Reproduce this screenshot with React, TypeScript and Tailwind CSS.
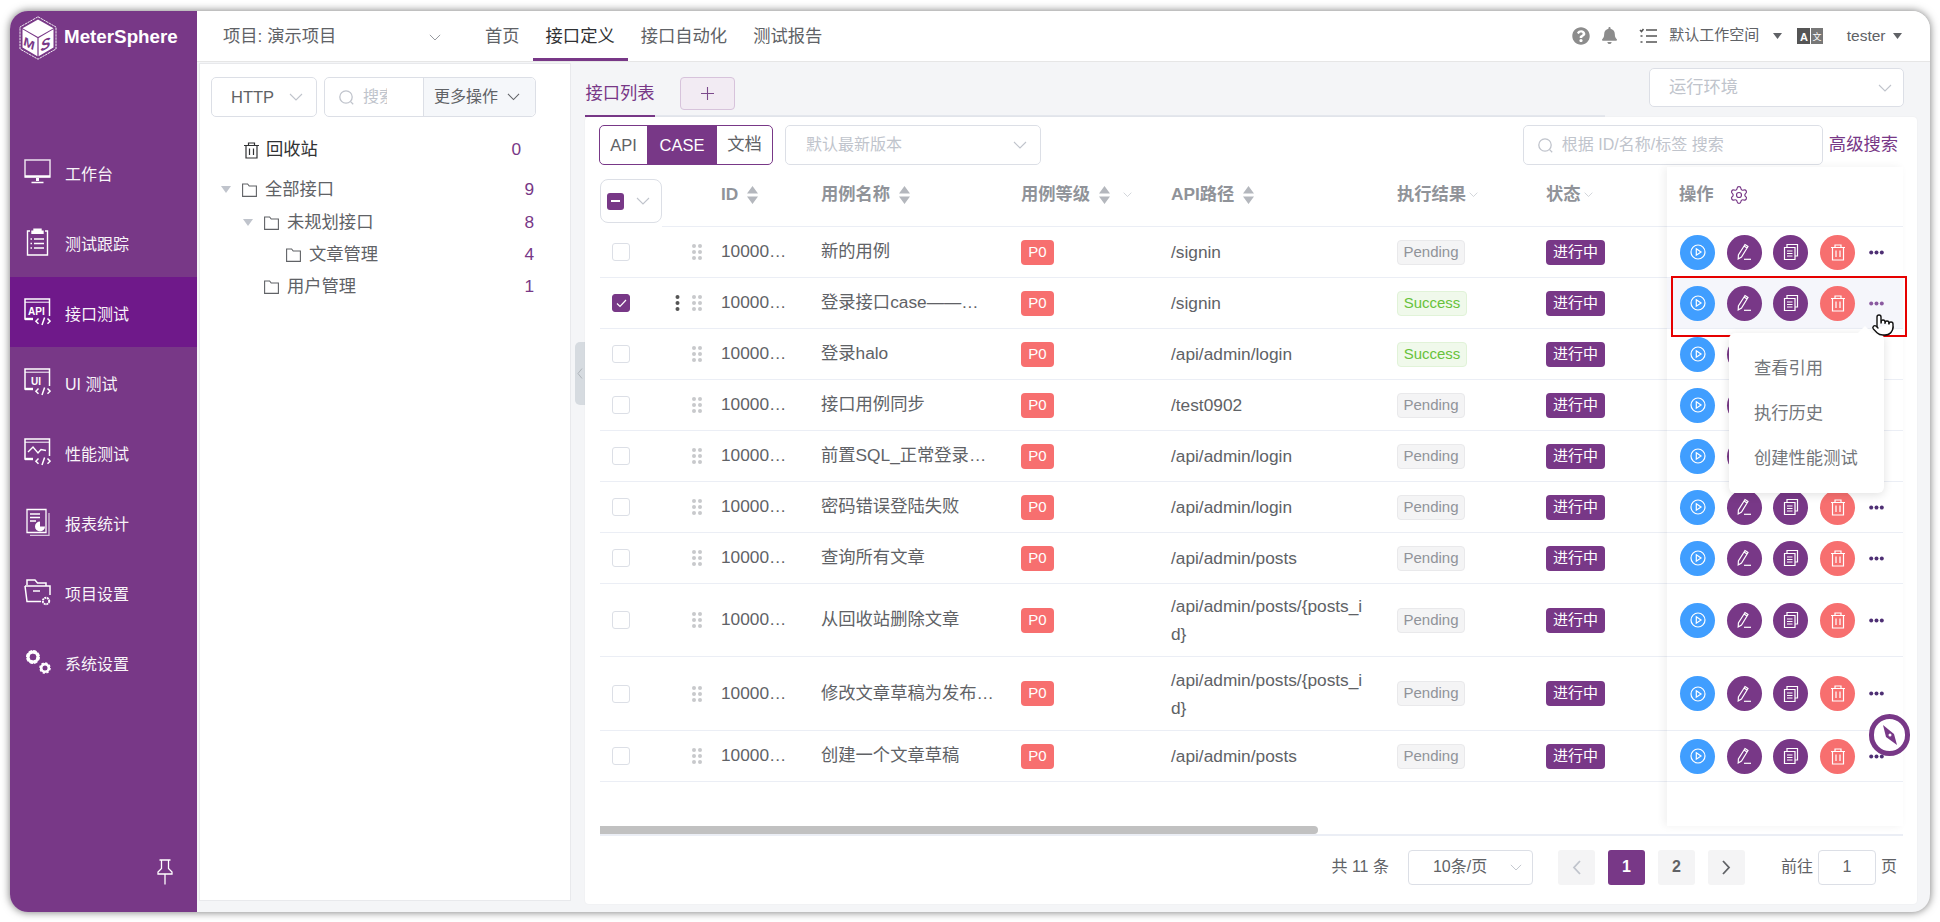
import React from "react";
import { FaBell, FaQuestionCircle } from "react-icons/fa";
import { Settings, Pointer } from "lucide-react";

const Chevron = ({ c = "#c0c4cc", w = 14 }: { c?: string; w?: number }) => (
  <svg width={w} height={(w * 8) / 14} viewBox="0 0 14 8" fill="none" stroke={c} strokeWidth="1.1">
    <path d="M1 1l6 6 6-6" />
  </svg>
);

const Search = () => (
  <svg width="17" height="17" viewBox="0 0 17 17" fill="none" stroke="#c0c4cc" strokeWidth="1.3">
    <circle cx="8" cy="8" r="6.2" />
    <path d="M12.6 12.6l2.6 2.6" />
  </svg>
);

const Folder = () => (
  <svg width="15" height="14" viewBox="0 0 15 14" fill="none" stroke="#606266" strokeWidth="1.1">
    <path d="M.6 13.4V1h5l1.6 2h7.2v10.4z" />
  </svg>
);

const Caret = () => (
  <svg width="10" height="7" viewBox="0 0 10 7" fill="#c0c4cc">
    <path d="M0 0h10L5 7z" />
  </svg>
);

const Sort = () => (
  <svg width="11" height="18" viewBox="0 0 11 18" fill="#b4b7bd" className="shrink-0">
    <path d="M5.5 0L11 7.4H0zM5.5 18L0 10.6h11z" />
  </svg>
);

const NavIcon = ({ k }: { k: string }) => {
  const code = (
    <g strokeWidth="1.5" stroke="#fff" fill="none">
      <path d="M14.5 20.5l-2.6 2.7 2.6 2.6M23.5 20.5l2.6 2.7-2.6 2.6M20.6 19.5l-2.6 7.5" />
    </g>
  );
  const frame = (
    <g stroke="#fff" fill="none" strokeWidth="1.5">
      <path d="M25.5 18V1H1v20h8" />
      <path d="M1 4.2h24.5" strokeWidth="1" />
      <path d="M1 21h8" strokeWidth="2.4" />
    </g>
  );
  return (
    <svg width="27" height="28" viewBox="0 0 27 28" fill="none" stroke="#fff" className="shrink-0">
      {k === "monitor" && (
        <g strokeWidth="1.5" fill="none">
          <path d="M1 2h25v17H1z" opacity=".85" />
          <path d="M1 18.4h25" strokeWidth="2.4" />
          <path d="M13.5 20v3" strokeWidth="3" />
          <path d="M7.5 24.5h12" strokeWidth="1.6" />
        </g>
      )}
      {k === "clip" && (
        <g strokeWidth="1.4" fill="none">
          <path d="M6 3H3.5v24h20V3H21" />
          <path d="M10 3.2V1.2h7v2h2v2H8v-2z" fill="#fff" />
          <path d="M10 11h10M10 15.500h10M10 20h10M6.500 11h1.500M6.500 15.500h1.500M6.500 20h1.500" />
        </g>
      )}
      {k === "api" && (
        <>
          {frame}
          <text x="4" y="16.500" fontSize="10" fontWeight="700" fill="#fff" stroke="none" fontFamily="Liberation Sans">API</text>
          {code}
        </>
      )}
      {k === "ui" && (
        <>
          {frame}
          <text x="7" y="16.500" fontSize="10" fontWeight="700" fill="#fff" stroke="none" fontFamily="Liberation Sans">UI</text>
          {code}
        </>
      )}
      {k === "perf" && (
        <>
          {frame}
          <path d="M4 14l5-5 5 6 3-3.500 5 1" strokeWidth="1.4" fill="none" />
          {code}
        </>
      )}
      {k === "report" && (
        <g fill="none" strokeWidth="1.3">
          <path d="M3 1.500h19v23H3z" />
          <path d="M25 5v22.500H6" opacity=".7" />
          <path d="M6 6h10M6 9.500h10M6 13h6" />
          <path d="M16 13.500a5 5 0 1 0 5 5h-5z" fill="#fff" stroke="none" />
        </g>
      )}
      {k === "proj" && (
        <g fill="none" strokeWidth="1.5">
          <path d="M3 7V2h8l2.500 3H22v3" />
          <path d="M1 8h25v9M17 23.500H3L1 8" />
          <path d="M9 13h7" />
          <circle cx="22" cy="23" r="3.200" strokeWidth="2" strokeDasharray="2 .6" />
        </g>
      )}
      {k === "sys" && (
        <g fill="none" stroke="#fff">
          <circle cx="9" cy="9" r="5.200" strokeWidth="3.600" strokeDasharray="3 1" />
          <circle cx="9" cy="9" r="5" strokeWidth="2.800" />
          <circle cx="21" cy="20" r="3.800" strokeWidth="2.600" />
          <circle cx="21" cy="20" r="4.400" strokeWidth="2.800" strokeDasharray="2 1.400" />
        </g>
      )}
    </svg>
  );
};

const nav = [
  ["monitor", "工作台"],
  ["clip", "测试跟踪"],
  ["api", "接口测试"],
  ["ui", "UI 测试"],
  ["perf", "性能测试"],
  ["report", "报表统计"],
  ["proj", "项目设置"],
  ["sys", "系统设置"],
];

const Logo = () => (
  <svg width="38" height="44" viewBox="0 0 38 44" className="shrink-0">
    <path d="M19 .8L37 11v22L19 43.200 1 33V11z" fill="none" stroke="#fff" strokeWidth=".9" strokeDasharray="2.500 .6" />
    <path d="M19 3.500L34.500 12.200 19 21 3.500 12.200z" fill="#fff" />
    <path d="M3.500 13.200L18.400 22v18.300L3.500 31.600z" fill="#fff" />
    <path d="M19.600 22l14.900-8.800v18.400L19.600 40.300z" fill="#fff" />
    <text x="0" y="0" fontSize="13" fontWeight="700" fontStyle="italic" fill="#783887" fontFamily="Liberation Sans" transform="translate(4.500 29) skewY(28)">M</text>
    <text x="0" y="0" fontSize="15" fontWeight="700" fontStyle="italic" fill="#783887" fontFamily="Liberation Sans" transform="translate(21.500 36) skewY(-28)">S</text>
  </svg>
);

const Sidebar = () => (
  <aside className="flex w-[187px] shrink-0 flex-col bg-[#783887] text-white">
    <div className="flex h-[126px] items-start gap-[7px] pl-[9px] pt-[5px]">
      <Logo />
      <span className="mt-[10px] text-[18.800px] font-bold leading-[22px]">MeterSphere</span>
    </div>
    {nav.map(([k, t]) => (
      <div key={k} className={`flex h-[70px] items-center gap-[14px] pl-[14px] text-[16px] ${k === "api" ? "bg-[#6f198a]" : ""}`}>
        <NavIcon k={k} />
        <span className="pt-[5px] opacity-95">{t}</span>
      </div>
    ))}
    <svg width="16" height="26" viewBox="0 0 16 26" fill="none" stroke="#fff" strokeWidth="1.300" className="mb-[27px] mr-[24px] mt-auto self-end">
      <path d="M2.500 1h11M4.500 1v8.500L1 13v2h14v-2l-3.500-3.500V1M8 15v10.500" />
    </svg>
  </aside>
);

const Header = () => (
  <header className="flex h-[51px] shrink-0 border-b border-[#e6e6e6] bg-white text-[#606266]">
    <div className="flex w-[275px] items-center pl-[26px] pt-[2px] text-[17.3px]">
      <span className="w-[206px]">项目: 演示项目</span>
      <Chevron w={12} c="#909399" />
    </div>
    <nav className="flex text-[17.3px]">
      <a className="flex h-[50px] items-center px-[13px] pt-[2px]">首页</a>
      <a className="flex h-[50px] items-center border-b-[3px] border-[#783887] px-[13px] pt-[4px] text-[#303133]">接口定义</a>
      <a className="flex h-[50px] items-center px-[13px] pt-[2px]">接口自动化</a>
      <a className="flex h-[50px] items-center px-[13px] pt-[2px]">测试报告</a>
    </nav>
    <div className="ml-auto flex items-center pb-[1px] pr-[28px] text-[15px]">
      <FaQuestionCircle className="text-[18px] text-[#8c8c8c]" />
      <FaBell className="ml-[11px] text-[17px] text-[#8c8c8c]" />
      <svg width="18" height="16" viewBox="0 0 18 16" fill="none" stroke="#555" strokeWidth="1.600" className="ml-[21.500px]">
        <path d="M7 2h11M7 8h11M7 14h11M1 2l1.500 1.500L4.500 1M1.500 8h2M1.500 14h2" />
      </svg>
      <span className="ml-[12px]">默认工作空间</span>
      <svg width="9" height="6" viewBox="0 0 9 6" fill="#606266" className="ml-[14px]"><path d="M0 0h9L4.500 6z" /></svg>
      <svg width="26" height="16" viewBox="0 0 26 16" className="ml-[15px]">
        <rect width="13" height="16" fill="#555" />
        <rect x="14" width="12" height="16" fill="#777" />
        <text x="3" y="12.500" fontSize="11" fontWeight="700" fill="#fff" fontFamily="Liberation Sans">A</text>
        <text x="15.500" y="12" fontSize="9" fill="#fff" fontFamily="Noto Sans CJK SC">文</text>
      </svg>
      <span className="ml-[23.500px] text-[15.500px]">tester</span>
      <svg width="9" height="6" viewBox="0 0 9 6" fill="#606266" className="ml-[7.500px]"><path d="M0 0h9L4.500 6z" /></svg>
    </div>
  </header>
);

const Tree = () => (
  <section className="mb-[11px] ml-[2px] mt-[1px] w-[372px] shrink-0 border border-[#e8e9ec] bg-white text-[17.3px] text-[#606266]">
    <div className="flex pl-[11px] pt-[13px] text-[16px]">
      <div className="flex h-[40px] w-[106px] items-center justify-between rounded-[5px] border border-[#dcdfe6] pl-[19px] pr-[13px] text-[16.500px]">
        HTTP <Chevron />
      </div>
      <div className="ml-[7px] flex h-[40px] w-[212px] rounded-[5px] border border-[#dcdfe6]">
        <div className="flex w-[98px] items-center gap-[8px] overflow-hidden pl-[13px] text-[#c0c4cc]">
          <Search />
          <span className="w-[24px] overflow-hidden whitespace-nowrap">搜索</span>
        </div>
        <div className="flex flex-1 items-center gap-[9px] rounded-r-[5px] border-l border-[#dcdfe6] bg-[#f5f7fa] pl-[10px]">
          更多操作 <Chevron c="#606266" w={13} />
        </div>
      </div>
    </div>
    <div className="mt-[17px] flex h-[32px] items-center justify-between pl-[44px] pr-[49px] text-[#303133]">
      <span className="flex items-center gap-[7px]">
        <svg width="15" height="17" viewBox="0 0 15 17" fill="none" stroke="#303133" strokeWidth="1.200">
          <path d="M0 3.500h15M4.500 3.500V1h6v2.500M2 3.500V16h11V3.500M5.500 6.500V13M9.500 6.500V13" />
        </svg>
        回收站
      </span>
      <span className="text-[#783887]">0</span>
    </div>
    <div className="mt-[7px] flex h-[33px] items-center justify-between pl-[21px] pr-[36px]">
      <span className="flex items-center"><Caret /><span className="ml-[11px] mr-[8px]"><Folder /></span>全部接口</span>
      <span className="text-[#783887]">9</span>
    </div>
    <div className="flex h-[33px] items-center justify-between pl-[43px] pr-[36px]">
      <span className="flex items-center"><Caret /><span className="ml-[11px] mr-[8px]"><Folder /></span>未规划接口</span>
      <span className="text-[#783887]">8</span>
    </div>
    <div className="flex h-[32px] items-center justify-between pl-[86px] pr-[36px]">
      <span className="flex items-center"><span className="mr-[8px]"><Folder /></span>文章管理</span>
      <span className="text-[#783887]">4</span>
    </div>
    <div className="flex h-[32px] items-center justify-between pl-[64px] pr-[36px]">
      <span className="flex items-center"><span className="mr-[8px]"><Folder /></span>用户管理</span>
      <span className="text-[#783887]">1</span>
    </div>
  </section>
);

const rows = [
  { name: "新的用例", api: "/signin", res: "Pending", h: "h-[51px]" },
  { name: "登录接口case——登录成功", api: "/signin", res: "Success", h: "h-[51px]", on: true },
  { name: "登录halo", api: "/api/admin/login", res: "Success", h: "h-[51px]" },
  { name: "接口用例同步", api: "/test0902", res: "Pending", h: "h-[51px]" },
  { name: "前置SQL_正常登录验证成功", api: "/api/admin/login", res: "Pending", h: "h-[51px]" },
  { name: "密码错误登陆失败", api: "/api/admin/login", res: "Pending", h: "h-[51px]" },
  { name: "查询所有文章", api: "/api/admin/posts", res: "Pending", h: "h-[51px]" },
  { name: "从回收站删除文章", api: "/api/admin/posts/{posts_id}", res: "Pending", h: "h-[73px]" },
  { name: "修改文章草稿为发布状态", api: "/api/admin/posts/{posts_id}", res: "Pending", h: "h-[74px]" },
  { name: "创建一个文章草稿", api: "/api/admin/posts", res: "Pending", h: "h-[51px]" },
];

const Tag = ({ res }: { res: string }) =>
  res === "Success" ? (
    <span className="flex h-[25px] w-[70px] items-center justify-center rounded-[4px] border border-[#e1f3d8] bg-[#f0f9eb] text-[15px] text-[#67c23a]">Success</span>
  ) : (
    <span className="flex h-[25px] w-[68px] items-center justify-center rounded-[4px] border border-[#e9e9eb] bg-[#f4f4f5] text-[15px] text-[#909399]">Pending</span>
  );

const Drag = () => (
  <svg width="10" height="16" viewBox="0 0 10 16" fill="#c8c9cc">
    <circle cx="2" cy="2" r="2" /><circle cx="8" cy="2" r="2" />
    <circle cx="2" cy="8" r="2" /><circle cx="8" cy="8" r="2" />
    <circle cx="2" cy="14" r="2" /><circle cx="8" cy="14" r="2" />
  </svg>
);

const OpBtn = ({ c, children }: { c: string; children: React.ReactNode }) => (
  <span className={`flex h-[35px] w-[35px] shrink-0 items-center justify-center rounded-full ${c}`}>{children}</span>
);

const Ops = ({ light }: { light?: boolean }) => (
  <div className="flex items-center gap-[11.700px] pl-[13px]">
    <OpBtn c="bg-[#409eff]">
      <svg width="18" height="18" viewBox="0 0 18 18" fill="none" stroke="#fff" strokeWidth="1.200">
        <circle cx="9" cy="9" r="7" /><path d="M7.300 5.800L12 9l-4.700 3.200z" />
      </svg>
    </OpBtn>
    <OpBtn c="bg-[#783887]">
      <svg width="18" height="18" viewBox="0 0 18 18" fill="none" stroke="#fff" strokeWidth="1.200">
        <path d="M10 1.500l3 2L6.500 14l-3.300 2 .2-4zM9 3l3 2" /><path d="M9 16.300h7" />
      </svg>
    </OpBtn>
    <OpBtn c="bg-[#783887]">
      <svg width="18" height="18" viewBox="0 0 18 18" fill="none" stroke="#fff" strokeWidth="1.200">
        <path d="M2.500 4.500h10.500v12H2.500zM5 4.500V1.500h10.500V13H13M5 8h5.500M5 10.500h5.500M5 13h5.500" />
      </svg>
    </OpBtn>
    <OpBtn c="bg-[#f76f6f]">
      <svg width="16" height="17" viewBox="0 0 16 17" fill="none" stroke="#fff" strokeWidth="1.200">
        <path d="M1 3.500h14M5 3.500V1h6v2.500M2.500 3.500V16h11V3.500M6 6.500V13M10 6.500V13" />
      </svg>
    </OpBtn>
    <svg width="15" height="5" viewBox="0 0 15 5" fill={light ? "#8a5aa0" : "#4e2f74"} className="ml-[2px] shrink-0">
      <circle cx="2.200" cy="2.500" r="2" /><circle cx="7.500" cy="2.500" r="2" /><circle cx="12.800" cy="2.500" r="2" />
    </svg>
  </div>
);

const Table = () => (
  <div className="mt-[2px] flex h-[659px]">
    <div className="w-[1067px] shrink-0 text-[17.300px] text-[#606266]">
      <div className="flex h-[60px]">
        <div className="mt-[12px] flex h-[44px] w-[62px] shrink-0 items-center gap-[12px] rounded-[8px] border border-[#dcdfe6] pl-[6px]">
          <span className="flex h-[17px] w-[17px] items-center justify-center rounded-[3px] bg-[#783887]">
            <span className="h-[2px] w-[9px] bg-white" />
          </span>
          <Chevron />
        </div>
        <div className="grid flex-1 grid-cols-[59px_100px_200px_150px_226px_149px_1fr] items-center border-b border-[#ebeef5] pb-[4px] font-bold text-[#909399]">
          <span />
          <span className="flex items-center gap-[9px]">ID <Sort /></span>
          <span className="flex items-center gap-[9px]">用例名称 <Sort /></span>
          <span className="flex items-center gap-[9px]">用例等级 <Sort /><span className="ml-[4px]"><Chevron w={9} /></span></span>
          <span className="flex items-center gap-[9px]">API路径 <Sort /></span>
          <span className="flex items-center gap-[3px]">执行结果 <Chevron w={9} /></span>
          <span className="flex items-center gap-[3px]">状态 <Chevron w={9} /></span>
        </div>
      </div>
      {rows.map((r) => (
        <div key={r.name} className={`grid grid-cols-[62px_30px_29px_100px_200px_150px_226px_149px_121px] items-center border-b border-[#ebeef5] ${r.h}`}>
          <span className="pl-[12px]">
            <span className={`flex h-[18px] w-[18px] items-center justify-center rounded-[3px] border ${r.on ? "border-[#783887] bg-[#783887]" : "border-[#dcdfe6] bg-white"}`}>
              {r.on && (
                <svg width="11" height="9" viewBox="0 0 11 9" fill="none" stroke="#fff" strokeWidth="1.200"><path d="M1 4.500l3 3 6-6.500" /></svg>
              )}
            </span>
          </span>
          <span className="flex justify-center">
            {r.on && (
              <svg width="5" height="16" viewBox="0 0 5 16" fill="#555">
                <circle cx="2.500" cy="2" r="2" /><circle cx="2.500" cy="8" r="2" /><circle cx="2.500" cy="14" r="2" />
              </svg>
            )}
          </span>
          <span className="flex"><Drag /></span>
          <span className="w-[72px] truncate">100001001</span>
          <span className={`truncate ${r.on ? "w-[165px]" : "w-[177px]"}`}>{r.name}</span>
          <span>
            <span className="flex h-[25px] w-[33px] items-center justify-center rounded-[4px] bg-[#f76f6f] text-[15px] text-white">P0</span>
          </span>
          <span className="w-[196px] break-all leading-[28px]">{r.api}</span>
          <span><Tag res={r.res} /></span>
          <span>
            <span className="flex h-[25px] w-[59px] items-center justify-center rounded-[4px] bg-[#783887] text-[15px] text-white">进行中</span>
          </span>
        </div>
      ))}
    </div>
    <div className="w-[236px] shrink-0 bg-white shadow-[-3px_0_8px_rgba(0,0,0,0.06)]">
      <div className="flex h-[60px] items-center gap-[15px] border-b border-[#ebeef5] pb-[4px] pl-[12px] text-[17.300px] font-bold text-[#909399]">
        操作 <Settings size={20} stroke="#783887" strokeWidth={1.4} />
      </div>
      {rows.map((r) => (
        <div key={r.name} className={`flex items-center border-b border-[#ebeef5] ${r.h} ${r.on ? "bg-[#f5f6fb]" : ""}`}>
          <Ops light={r.on} />
        </div>
      ))}
    </div>
  </div>
);

const Pager = () => (
  <div className="flex h-[65px] items-center justify-end pb-[3px] pr-[6px] text-[16px] text-[#606266]">
    <span>共 11 条</span>
    <div className="ml-[19px] flex h-[35px] w-[125px] items-center justify-between rounded-[4px] border border-[#dcdfe6] pl-[24px] pr-[10px]">
      10条/页 <Chevron w={12} />
    </div>
    <span className="ml-[25px] flex h-[35px] w-[37px] items-center justify-center rounded-[3px] bg-[#f4f4f5]">
      <svg width="9" height="15" viewBox="0 0 9 15" fill="none" stroke="#c0c4cc" strokeWidth="1.800"><path d="M8 1L2 7.500 8 14" /></svg>
    </span>
    <span className="ml-[13px] flex h-[35px] w-[37px] items-center justify-center rounded-[3px] bg-[#783887] font-bold text-white">1</span>
    <span className="ml-[13px] flex h-[35px] w-[37px] items-center justify-center rounded-[3px] bg-[#f4f4f5] font-bold">2</span>
    <span className="ml-[13px] flex h-[35px] w-[37px] items-center justify-center rounded-[3px] bg-[#f4f4f5]">
      <svg width="9" height="15" viewBox="0 0 9 15" fill="none" stroke="#606266" strokeWidth="1.800"><path d="M1 1l6 6.500L1 14" /></svg>
    </span>
    <span className="ml-[36px]">前往</span>
    <span className="ml-[5px] flex h-[35px] w-[58px] items-center justify-center rounded-[4px] border border-[#dcdfe6]">1</span>
    <span className="ml-[5px]">页</span>
  </div>
);

const Main = () => (
  <section className="ml-[14px] flex w-[1332px] shrink-0 flex-col">
    <div className="flex h-[55px] items-start">
      <div className="flex h-[55px] w-[1020px] items-start border-b-2 border-[#e4e7ed]">
        <span className="flex h-[55px] w-[70px] items-center justify-center border-b-2 border-[#783887] pt-[11px] text-[17.300px] text-[#783887]">接口列表</span>
        <span className="ml-[25px] mt-[15px] flex h-[33px] w-[55px] items-center justify-center rounded-[4px] border border-[#d7c3db] bg-[#f2ebf3]">
          <svg width="13" height="13" viewBox="0 0 13 13" stroke="#7c4a8c" strokeWidth="1.100"><path d="M6.500 0v13M0 6.500h13" /></svg>
        </span>
      </div>
      <div className="ml-[44px] mt-[6px] flex h-[39px] w-[255px] items-center justify-between rounded-[5px] border border-[#dcdfe6] bg-white pl-[19px] pr-[11px] text-[17.300px] text-[#c0c4cc]">
        运行环境 <Chevron />
      </div>
    </div>
    <div className="mb-[8px] flex h-[787px] flex-col rounded-[4px] bg-white pl-[15px] pr-[14px] pt-[8px] shadow-[0_0_2px_rgba(0,0,0,0.06)]">
      <div className="flex h-[40px] items-start">
        <div className="-ml-[1px] flex h-[40px] w-[174px] overflow-hidden rounded-[5px] border border-[#783887] text-[#606266]">
          <span className="flex w-[47px] items-center justify-center text-[16.500px]">API</span>
          <span className="flex w-[70px] items-center justify-center bg-[#783887] text-[16.500px] text-white">CASE</span>
          <span className="flex flex-1 items-center justify-center text-[17.300px]">文档</span>
        </div>
        <div className="ml-[12px] flex h-[40px] w-[256px] items-center justify-between rounded-[5px] border border-[#dcdfe6] pl-[20px] pr-[13px] text-[16px] text-[#c0c4cc]">
          默认最新版本 <Chevron />
        </div>
        <div className="ml-auto flex h-[40px] w-[300px] items-center gap-[8px] rounded-[5px] border border-[#dcdfe6] pl-[13px] text-[16px] text-[#c0c4cc]">
          <Search /> 根据 ID/名称/标签 搜索
        </div>
        <span className="ml-[6px] mr-[5px] flex h-[40px] items-center text-[17.300px] text-[#783887]">高级搜索</span>
      </div>
      <Table />
      <div className="border-b-2 border-[#ebeef5]">
        <div className="h-[8px] w-[718px] rounded-r-[5px] bg-[#c1c1c1]" />
      </div>
      <Pager />
    </div>
  </section>
);

export default function App() {
  return (
    <div className="relative h-[922px] w-[1940px] overflow-hidden bg-white pb-[10px] pl-[10px] pr-[10px] pt-[11px] [font-family:'Liberation_Sans','Noto_Sans_CJK_SC',sans-serif]">
      <div className="flex h-[901px] overflow-hidden rounded-[18px] bg-[#f4f5f7] shadow-[0_0_8px_rgba(0,0,0,0.55)]">
        <Sidebar />
        <div className="flex min-w-0 flex-1 flex-col">
          <Header />
          <div className="flex min-h-0 flex-1">
            <Tree />
            <div className="mt-[280px] -mr-[14px] ml-[4px] flex h-[63px] w-[10px] shrink-0 items-center justify-center rounded-l-[5px] bg-[#d6dbe0]">
              <svg width="6" height="11" viewBox="0 0 6 11" fill="none" stroke="#aeb4ba"><path d="M5 .5L1 5.500l4 5" /></svg>
            </div>
            <Main />
          </div>
        </div>
      </div>

      {/* Overlays */}
      <div className="absolute left-[1671px] top-[276px] h-[61px] w-[236px] border-2 border-[#e60000]" />
      <div className="absolute left-[1729px] top-[333px] flex h-[160px] w-[155px] flex-col justify-center gap-[17px] rounded-[6px] bg-white pl-[25px] text-[17.300px] text-[#73767a] shadow-[0_2px_10px_rgba(0,0,0,0.12)]">
        <span className="leading-[28px]">查看引用</span>
        <span className="leading-[28px]">执行历史</span>
        <span className="leading-[28px]">创建性能测试</span>
        <span className="absolute -top-[5px] left-[131px] h-[10px] w-[10px] rotate-45 bg-white" />
      </div>
      <div className="absolute left-[1871px] top-[313px]">
        <Pointer size={24} fill="#fff" stroke="#111" strokeWidth={1.4} />
      </div>
      <div className="absolute left-[1869px] top-[714px] flex h-[42px] w-[41px] items-center justify-center rounded-full border-[5px] border-[#783887] bg-white">
        <svg width="20" height="24" viewBox="0 0 20 24" fill="#783887"><path d="M3 2l11 9 3 11-11-8z" /><circle cx="10" cy="12" r="1.500" fill="#fff" /></svg>
      </div>
    </div>
  );
}
